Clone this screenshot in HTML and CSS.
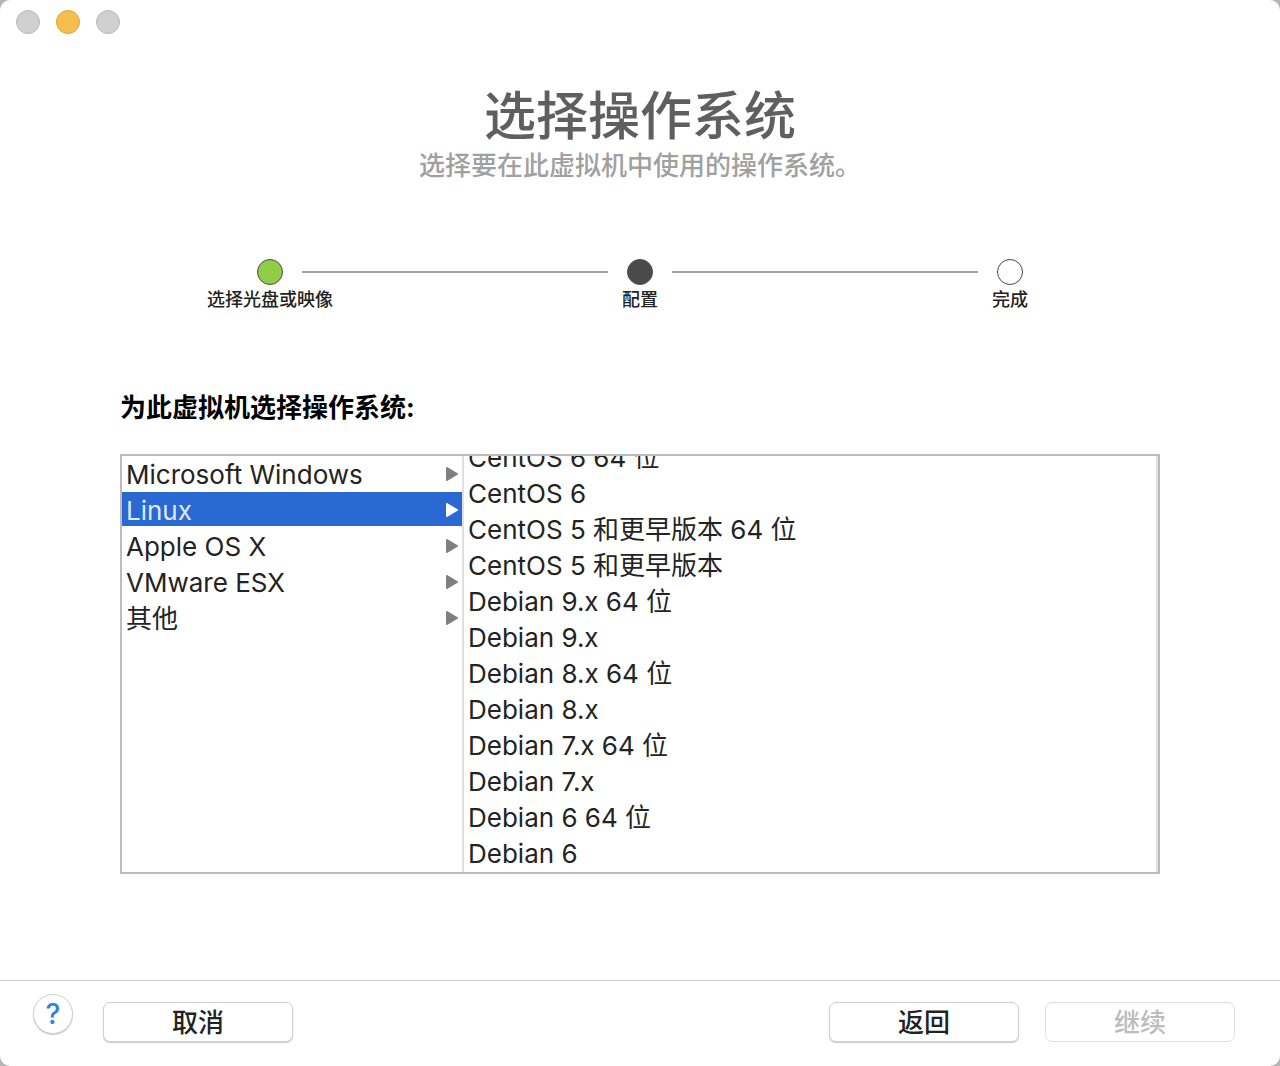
FILE: index.html
```html
<!DOCTYPE html>
<html lang="zh-CN">
<head>
<meta charset="utf-8">
<title>选择操作系统</title>
<link rel="stylesheet" href="styles.css">
</head>
<body>
<div class="window">
  <div class="titlebar">
    <button class="light" type="button" aria-label="关闭"></button>
    <button class="light light-min" type="button" aria-label="最小化"></button>
    <button class="light" type="button" aria-label="缩放"></button>
  </div>
  <header class="heading">
    <h1>选择操作系统</h1>
    <p>选择要在此虚拟机中使用的操作系统。</p>
  </header>
  <ol class="steps">
    <li class="step done"><span class="dot"></span><span class="step-label">选择光盘或映像</span></li>
    <li class="step current"><span class="dot"></span><span class="step-label">配置</span></li>
    <li class="step"><span class="dot"></span><span class="step-label">完成</span></li>
  </ol>
  <main class="content">
    <h2>为此虚拟机选择操作系统:</h2>
    <div class="browser">
      <ul class="families">
        <li><span>Microsoft Windows</span><svg class="arrow" viewBox="0 0 12 14"><path d="M1 1L11 7L1 13Z"/></svg></li>
        <li class="selected"><span>Linux</span><svg class="arrow" viewBox="0 0 12 14"><path d="M1 1L11 7L1 13Z"/></svg></li>
        <li><span>Apple OS X</span><svg class="arrow" viewBox="0 0 12 14"><path d="M1 1L11 7L1 13Z"/></svg></li>
        <li><span>VMware ESX</span><svg class="arrow" viewBox="0 0 12 14"><path d="M1 1L11 7L1 13Z"/></svg></li>
        <li><span>其他</span><svg class="arrow" viewBox="0 0 12 14"><path d="M1 1L11 7L1 13Z"/></svg></li>
      </ul>
      <ul class="versions">
        <li>CentOS 6 64 位</li>
        <li>CentOS 6</li>
        <li>CentOS 5 和更早版本 64 位</li>
        <li>CentOS 5 和更早版本</li>
        <li>Debian 9.x 64 位</li>
        <li>Debian 9.x</li>
        <li>Debian 8.x 64 位</li>
        <li>Debian 8.x</li>
        <li>Debian 7.x 64 位</li>
        <li>Debian 7.x</li>
        <li>Debian 6 64 位</li>
        <li>Debian 6</li>
      </ul>
    </div>
  </main>
  <footer class="footer">
    <button class="help" type="button" aria-label="帮助">?</button>
    <button class="btn" type="button">取消</button>
    <span class="spacer"></span>
    <button class="btn" type="button">返回</button>
    <button class="btn" type="button" disabled>继续</button>
  </footer>
</div>
</body>
</html>
```
FILE: styles.css
```css
* { box-sizing: border-box; }
body {
  margin: 0;
  background: #b4b4b4;
  color: #232323;
  font-family: Inter, "Noto Sans CJK SC", sans-serif;
  font-size: 26px;
}
h1, h2, p, ul, ol { margin: 0; padding: 0; }
ul, ol { list-style: none; }
.window {
  display: flex;
  flex-direction: column;
  min-height: 100vh;
  background: #fff;
  border-radius: 10px;
}
.titlebar { display: flex; gap: 16px; padding: 10px 16px; }
.light {
  width: 24px;
  height: 24px;
  padding: 0;
  border: 1px solid #b9b9b9;
  border-radius: 50%;
  background: #d0d0d0;
}
.light-min { background: #f6be4f; border-color: #dda43a; }
.heading { padding-top: 41px; text-align: center; font-weight: 500; }
.heading h1 { font-size: 52px; line-height: 64px; font-weight: 500; color: #5f5f5f; }
.heading p { font-size: 26px; line-height: 34px; color: #a0a0a0; }
.steps {
  display: grid;
  grid-template-columns: repeat(3, 370px);
  justify-content: center;
  padding-top: 76px;
}
.step {
  position: relative;
  display: flex;
  flex-direction: column;
  align-items: center;
}
.step + .step::before {
  content: "";
  position: absolute;
  top: 12px;
  right: calc(50% + 32px);
  width: calc(100% - 64px);
  height: 2px;
  background: #a2a2a2;
}
.dot { width: 26px; height: 26px; border: 1px solid #4a4a4a; border-radius: 50%; background: #fff; }
.done .dot { background: #8fce46; }
.current .dot { background: #4a4a4a; }
.step-label { font-size: 18px; line-height: 30px; font-weight: 500; }
.content { flex: 1; padding: 74px 120px 0; }
.content h2 { font-size: 26px; line-height: 38px; font-weight: 700; color: #000; }
.browser {
  display: grid;
  grid-template-columns: 342px 1fr;
  height: 420px;
  margin-top: 27px;
  border: 2px solid #bcbcbc;
}
.browser li { height: 36px; line-height: 36px; white-space: nowrap; }
.families { border-right: 2px solid #e0e0e0; }
.families li { display: flex; align-items: center; justify-content: space-between; padding: 0 4px; }
.families span { padding-top: 2px; }
.families .selected { background: linear-gradient(#2a69d2, #2a69d2) top / 100% 34px no-repeat; color: #dfe9f8; }
.arrow { width: 12px; height: 14px; fill: #808080; stroke: #808080; stroke-width: 2; stroke-linejoin: round; }
.selected .arrow { fill: #fff; stroke: #fff; }
.versions { display: flex; flex-direction: column; justify-content: flex-end; overflow: hidden; padding-left: 4px; border-right: 2px solid #e0e0e0; }
.versions li { flex: none; }
.footer { display: flex; align-items: flex-start; gap: 26px; height: 86px; padding: 13px 45px 0 33px; border-top: 1px solid #c9c9c9; }
.help, .btn { padding: 0; border: 1px solid #d0d0d0; background: #fff; font-family: inherit; box-shadow: 0 1px 1px #0003; }
.help { width: 40px; height: 40px; margin-right: 4px; border-radius: 50%; color: #2f7de8; font-size: 28px; line-height: 38px; font-weight: 500; }
.btn { width: 190px; height: 40px; margin-top: 8px; padding-top: 1px; border-radius: 7px; color: #232323; font-size: 26px; line-height: 36px; font-weight: 500; }
.btn:disabled { color: #bcbcbc; border-color: #e0e0e0; box-shadow: none; }
.spacer { flex: 1; }
```
